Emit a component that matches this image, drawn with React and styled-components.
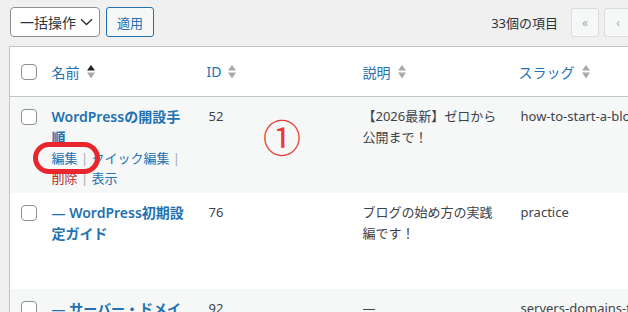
import React from 'react';
import styled, { createGlobalStyle } from 'styled-components';

const GlobalStyle = createGlobalStyle`
  html, body {
    margin: 0;
    padding: 0;
    background: #f0f0f1;
    overflow: hidden;
  }
  body {
    font-family: "Noto Sans", "Noto Sans CJK JP", sans-serif;
    font-size: 13px;
    color: #3c434a;
  }
`;

const Page = styled.div`
  position: relative;
  width: 628px;
  height: 312px;
  overflow: hidden;
  box-sizing: border-box;
  padding: 7px 0 0 9px;
`;

const Toolbar = styled.div`
  display: flex;
  align-items: center;
  width: 622px;
  height: 30px;
  padding-left: 1px;
  margin-bottom: 9px;
`;

const BulkSelect = styled.div`
  display: flex;
  align-items: center;
  gap: 4px;
  box-sizing: border-box;
  width: 90px;
  height: 30px;
  padding: 0 0 0 9px;
  border: 1px solid #8c8f94;
  border-radius: 4px;
  background: #fff;
  font-size: 14px;
  color: #2c3338;
`;

const ApplyButton = styled.button`
  box-sizing: border-box;
  height: 30px;
  width: 48px;
  margin-left: 6px;
  padding: 0;
  border: 1px solid #2271b1;
  border-radius: 3px;
  background: #f6f7f7;
  color: #2271b1;
  font-family: inherit;
  font-size: 13px;
`;

const Pager = styled.div`
  display: flex;
  align-items: center;
  margin-left: auto;
  gap: 5px;
`;

const Count = styled.span`
  font-size: 13px;
  color: #2c3338;
  margin-right: 8px;
`;

const PageButton = styled.span`
  display: flex;
  align-items: center;
  justify-content: center;
  box-sizing: border-box;
  width: 28px;
  height: 29px;
  border: 1px solid #dcdcde;
  border-radius: 3px;
  background: #f6f7f7;
  color: #a7aaad;
  font-size: 12px;
`;

const Table = styled.table`
  table-layout: fixed;
  width: 700px;
  border-collapse: collapse;
  background: #fff;
  border: 1px solid #c3c4c7;
`;

const HeadCell = styled.th`
  height: 49px;
  padding: 0 10px;
  text-align: left;
  font-weight: 400;
  font-size: 14px;
  color: #2271b1;
  vertical-align: middle;
  border-bottom: 1px solid #c3c4c7;
`;

const CheckHead = styled.th`
  width: 32px;
  padding: 0 0 0 11px;
  box-sizing: border-box;
  text-align: left;
  vertical-align: middle;
  border-bottom: 1px solid #c3c4c7;
`;

const SortLabel = styled.span`
  display: inline-flex;
  align-items: center;
  gap: 7px;
`;

const Row = styled.tr`
  background: ${p => (p.$striped ? '#f6f7f7' : '#fff')};
`;

const CheckCell = styled.td`
  padding: 12px 0 0 11px;
  vertical-align: top;
`;

const Cell = styled.td`
  padding: 9px 10px 5px ${p => p.$indent || 10}px;
  vertical-align: top;
  font-size: 13px;
  line-height: 21px;
  color: #3c434a;
  white-space: ${p => (p.$nowrap ? 'nowrap' : 'normal')};
  overflow: ${p => (p.$nowrap ? 'hidden' : 'visible')};
`;

const Box = styled.span`
  display: block;
  box-sizing: border-box;
  width: 16px;
  height: 16px;
  border: 1px solid #8c8f94;
  border-radius: 4px;
  background: #fff;
`;

const Title = styled.a`
  display: block;
  font-size: 14px;
  font-weight: 600;
  line-height: 21px;
  color: #2271b1;
`;

const Actions = styled.div`
  position: relative;
  font-size: 13px;
  line-height: 20px;
  color: #a7aaad;
  visibility: ${p => (p.$visible ? 'visible' : 'hidden')};
`;

const ActionLink = styled.a`
  color: ${p => (p.$danger ? '#b32d2e' : '#2271b1')};
`;

// red hand-drawn highlight around 編集
const Ring = styled.span`
  position: absolute;
  left: -19px;
  top: -6px;
  width: 67px;
  height: 32px;
  box-sizing: border-box;
  border: 5px solid #e9262d;
  border-radius: 16px;
`;

const Marker = styled.span`
  position: absolute;
  left: 263px;
  top: 117px;
  font-family: "Noto Sans CJK JP", sans-serif;
  font-size: 38px;
  line-height: 1;
  color: #e53a35;
`;

function SortIcon({ active }) {
  return (
    <svg width="8" height="14" viewBox="0 0 8 14">
      <path d="M4 0 L8 5.5 L0 5.5 Z" fill={active ? '#1d2327' : '#a7aaad'} />
      <path d="M0 7.5 L8 7.5 L4 13.5 Z" fill="#a7aaad" />
    </svg>
  );
}

function Chevron() {
  return (
    <svg width="13" height="8" viewBox="0 0 13 8">
      <path d="M1 1.2 L6.5 6.5 L12 1.2" fill="none" stroke="#2c3338" strokeWidth="1.4" />
    </svg>
  );
}

const rows = [
  {
    title: 'WordPressの開設手順',
    id: 52,
    desc: '【2026最新】ゼロから公開まで！',
    slug: 'how-to-start-a-blog',
    striped: true,
    showActions: true
  },
  {
    title: '— WordPress初期設定ガイド',
    id: 76,
    desc: 'ブログの始め方の実践編です！',
    slug: 'practice'
  },
  {
    title: '— サーバー・ドメインの準備',
    id: 92,
    desc: '—',
    slug: 'servers-domains-the-basics',
    striped: true
  }
];

export default function App() {
  return (
    <Page>
      <GlobalStyle />
      <Toolbar>
        <BulkSelect>
          一括操作
          <Chevron />
        </BulkSelect>
        <ApplyButton>適用</ApplyButton>
        <Pager>
          <Count>33個の項目</Count>
          <PageButton>«</PageButton>
          <PageButton>‹</PageButton>
        </Pager>
      </Toolbar>

      <Table>
        <colgroup>
          <col style={{ width: 32 }} />
          <col style={{ width: 155 }} />
          <col style={{ width: 156 }} />
          <col style={{ width: 156 }} />
          <col />
        </colgroup>
        <thead>
          <tr>
            <CheckHead>
              <Box />
            </CheckHead>
            <HeadCell>
              <SortLabel>
                名前 <SortIcon active />
              </SortLabel>
            </HeadCell>
            <HeadCell>
              <SortLabel>
                ID <SortIcon />
              </SortLabel>
            </HeadCell>
            <HeadCell>
              <SortLabel>
                説明 <SortIcon />
              </SortLabel>
            </HeadCell>
            <HeadCell>
              <SortLabel>
                スラッグ <SortIcon />
              </SortLabel>
            </HeadCell>
          </tr>
        </thead>
        <tbody>
          {rows.map(row => (
            <Row key={row.id} $striped={row.striped}>
              <CheckCell>
                <Box />
              </CheckCell>
              <Cell>
                <Title>{row.title}</Title>
                <Actions $visible={row.showActions}>
                  <ActionLink>編集</ActionLink> | <ActionLink>クイック編集</ActionLink> |{' '}
                  <ActionLink $danger>削除</ActionLink> | <ActionLink>表示</ActionLink>
                  {row.showActions && <Ring />}
                </Actions>
              </Cell>
              <Cell $indent={12}>{row.id}</Cell>
              <Cell>{row.desc}</Cell>
              <Cell $nowrap $indent={12}>{row.slug}</Cell>
            </Row>
          ))}
        </tbody>
      </Table>
      <Marker>①</Marker>
    </Page>
  );
}
